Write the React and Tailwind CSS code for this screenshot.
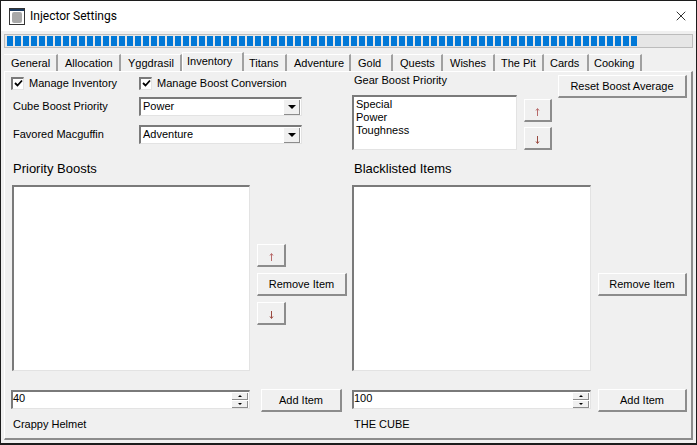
import { X } from "lucide-react";

const font = { fontFamily: '"Liberation Sans", Arial, sans-serif' };

const tabs = [
  { name: "General", w: "w-[54px]", pl: "pl-[7px]" },
  { name: "Allocation", w: "w-[63px]", pl: "pl-[7px]" },
  { name: "Yggdrasil", w: "w-[61px]", pl: "pl-[7px]" },
  { name: "Inventory", w: "w-[62px]", pl: "pl-[4px]", active: true },
  { name: "Titans", w: "w-[43px]", pl: "pl-[5px]" },
  { name: "Adventure", w: "w-[64px]", pl: "pl-[7px]" },
  { name: "Gold", w: "w-[42px]", pl: "pl-[7px]" },
  { name: "Quests", w: "w-[50px]", pl: "pl-[7px]" },
  { name: "Wishes", w: "w-[52px]", pl: "pl-[7px]" },
  { name: "The Pit", w: "w-[49px]", pl: "pl-[6px]" },
  { name: "Cards", w: "w-[45px]", pl: "pl-[6px]" },
  { name: "Cooking", w: "w-[53px]", pl: "pl-[5px]" },
];

const Button = ({ className, children }) => (
  <button className={`flex items-center justify-center bg-[#f0f0f0] border-t border-l border-t-white border-l-white border-r-2 border-b-2 border-r-[#8c8c8c] border-b-[#8c8c8c] text-[11px] text-black ${className}`}>
    {children}
  </button>
);

const Sunken = ({ className, children }) => (
  <div className={`bg-white border-t-2 border-l-2 border-t-[#7a7a7a] border-l-[#7a7a7a] border-r border-b border-r-[#e3e3e3] border-b-[#e3e3e3] ${className}`}>
    {children}
  </div>
);

const Arrow = ({ up }) => (
  <svg width="7" height="10" viewBox="0 0 7 10" className="mt-[3px]">
    <path
      d={up ? "M3.5 2V9M2 3.5L3.5 1.5L5 3.5" : "M3.5 1V8M2 6.5L3.5 8.5L5 6.5"}
      stroke={up ? "#b86a6a" : "#9a4a40"}
      fill="none"
    />
  </svg>
);

const Check = ({ label, className }) => (
  <div className={`flex items-center ${className}`}>
    <div className="w-[13px] h-[13px] bg-white border-t-2 border-l-2 border-t-[#7a7a7a] border-l-[#7a7a7a] border-r border-b border-r-[#e3e3e3] border-b-[#e3e3e3] flex items-center justify-center">
      <svg width="9" height="9" viewBox="0 0 9 9">
        <path d="M1 4L3.5 6.5L8 1.5" stroke="#000" strokeWidth="1.8" fill="none" />
      </svg>
    </div>
    <span className="ml-[5px] text-[11px]">{label}</span>
  </div>
);

const Combo = ({ value }) => (
  <Sunken className="w-[163px] h-[19px] flex items-center justify-between">
    <span className="pl-[2px] text-[11px] leading-none mb-[2px]">{value}</span>
    <div className="w-[16px] h-[15px] mr-[1px] bg-[#f0f0f0] border-r border-b border-[#8c8c8c] flex items-center justify-center">
      <div className="w-0 h-0 border-l-[4px] border-r-[4px] border-t-[4px] border-l-transparent border-r-transparent border-t-black" />
    </div>
  </Sunken>
);

const Spinner = ({ value }) => (
  <Sunken className="w-[239px] h-[19px] mt-[1px] flex items-center justify-between">
    <span className="text-[11px] leading-none mb-[3px]">{value}</span>
    <div className="w-[16px] mr-[1px] flex flex-col gap-[1px]">
      <div className="h-[7px] bg-[#f0f0f0] border-r border-b border-[#8c8c8c] flex items-center justify-center">
        <div className="w-0 h-0 border-l-[2px] border-r-[2px] border-b-[2px] border-l-transparent border-r-transparent border-b-black" />
      </div>
      <div className="h-[7px] bg-[#f0f0f0] border-r border-b border-[#8c8c8c] flex items-center justify-center">
        <div className="w-0 h-0 border-l-[2px] border-r-[2px] border-t-[2px] border-l-transparent border-r-transparent border-t-black" />
      </div>
    </div>
  </Sunken>
);

export default function App() {
  return (
    <div style={font} className="w-[697px] h-[445px] bg-[#f0f0f0] border border-b-2 border-[#1c1c1c] flex flex-col text-black overflow-hidden">
      {/* barra de titulo */}
      <div className="h-[30px] shrink-0 bg-white flex items-center">
        <svg width="16" height="17" viewBox="0 0 16 17" className="ml-[8px]">
          <rect x="0.5" y="0.5" width="15" height="16" fill="#fff" stroke="#333" />
          <rect x="1" y="1" width="14" height="2" fill="#1c3a5e" />
          <rect x="3" y="4" width="10" height="11" rx="2" fill="#a8a8a8" />
        </svg>
        <span className="ml-[5px] text-[12px]" style={{ fontFamily: 'Roboto, sans-serif' }}>Injector Settings</span>
        <X className="ml-auto mr-[7px]" size={16} strokeWidth={1.2} />
      </div>

      {/* progreso */}
      <div className="mt-[3px] mx-[3px] h-[14px] shrink-0 bg-[#e6e6e6] border border-[#bcbcbc] flex gap-[2px] pl-[2px] py-[1px]">
        {Array.from({ length: 79 }, (_, i) => (
          <div key={i} className="w-[6px] bg-[#0078d7]" />
        ))}
      </div>

      {/* pestañas */}
      <div className="mt-[4px] ml-[3px] h-[19px] shrink-0 flex items-end text-[11px]">
        {tabs.map((t) => (
          <div
            key={t.name}
            className={`${t.w} ${t.pl} flex items-center shrink-0 border-r-2 border-r-[#a0a0a0] ${t.active ? "h-[19px] bg-[#f0f0f0] border-t border-l border-t-white border-l-white pb-[2px]" : "h-[17px] bg-[#f0f0f0] border-t border-t-white"}`}
          >
            {t.name}
          </div>
        ))}
      </div>

      {/* panel */}
      <div className="mx-[3px] mb-[3px] flex-1 border-t border-l border-t-white border-l-white border-r-2 border-b-2 border-r-[#8c8c8c] border-b-[#8c8c8c] flex flex-col pl-[6px]">
        <div className="flex h-[79px] shrink-0">
          <div className="w-[341px] shrink-0 flex flex-col">
            <div className="flex mt-[4px] h-[14px]">
              <Check label="Manage Inventory" className="w-[128px]" />
              <Check label="Manage Boost Conversion" />
            </div>
            <div className="flex items-center mt-[7px]">
              <span className="w-[128px] text-[11px] pl-[2px]">Cube Boost Priority</span>
              <Combo value="Power" />
            </div>
            <div className="flex items-center mt-[9px]">
              <span className="w-[128px] text-[11px] pl-[2px] mb-[1px]">Favored Macguffin</span>
              <Combo value="Adventure" />
            </div>
          </div>
          <div className="flex flex-col w-[164px] shrink-0">
            <span className="text-[11px] h-[15px] leading-[15px] pt-[1px] pl-[2px]">Gear Boost Priority</span>
            <Sunken className="w-[165px] h-[55px] mt-[8px] pl-[2px] pt-[1px] text-[11px] leading-[13px]">
              <div>Special</div>
              <div>Power</div>
              <div>Toughness</div>
            </Sunken>
          </div>
          <div className="flex flex-col gap-[5px] ml-[8px] mt-[27px]">
            <Button className="w-[28px] h-[23px]"><Arrow up /></Button>
            <Button className="w-[28px] h-[23px]"><Arrow /></Button>
          </div>
          <Button className="w-[129px] h-[23px] ml-[6px] mt-[3px]">Reset Boost Average</Button>
        </div>

        <div className="flex mt-[10px] text-[13px] h-[16px] items-center">
          <span className="w-[341px] pl-[2px]">Priority Boosts</span>
          <span className="pl-[2px]">Blacklisted Items</span>
        </div>

        <div className="flex mt-[8px] h-[186px] shrink-0">
          <Sunken className="w-[238px] ml-[1px]" />
          <div className="w-[103px] ml-[-1px] pl-[8px] flex flex-col pt-[59px] gap-[6px]">
            <Button className="w-[29px] h-[23px]"><Arrow up /></Button>
            <Button className="w-[90px] h-[23px]">Remove Item</Button>
            <Button className="w-[29px] h-[23px]"><Arrow /></Button>
          </div>
          <Sunken className="w-[239px]" />
          <Button className="w-[89px] h-[23px] ml-[7px] mt-[88px]">Remove Item</Button>
        </div>

        <div className="flex mt-[18px] h-[23px]">
          <Spinner value="40" />
          <Button className="w-[81px] h-[23px] ml-[11px]">Add Item</Button>
          <div className="w-[10px] shrink-0" />
          <Spinner value="100" />
          <Button className="w-[89px] h-[23px] ml-[7px]">Add Item</Button>
        </div>

        <div className="flex mt-[4px] text-[11px]">
          <span className="w-[341px] pl-[2px]">Crappy Helmet</span>
          <span className="pl-[2px]">THE CUBE</span>
        </div>
      </div>
    </div>
  );
}
